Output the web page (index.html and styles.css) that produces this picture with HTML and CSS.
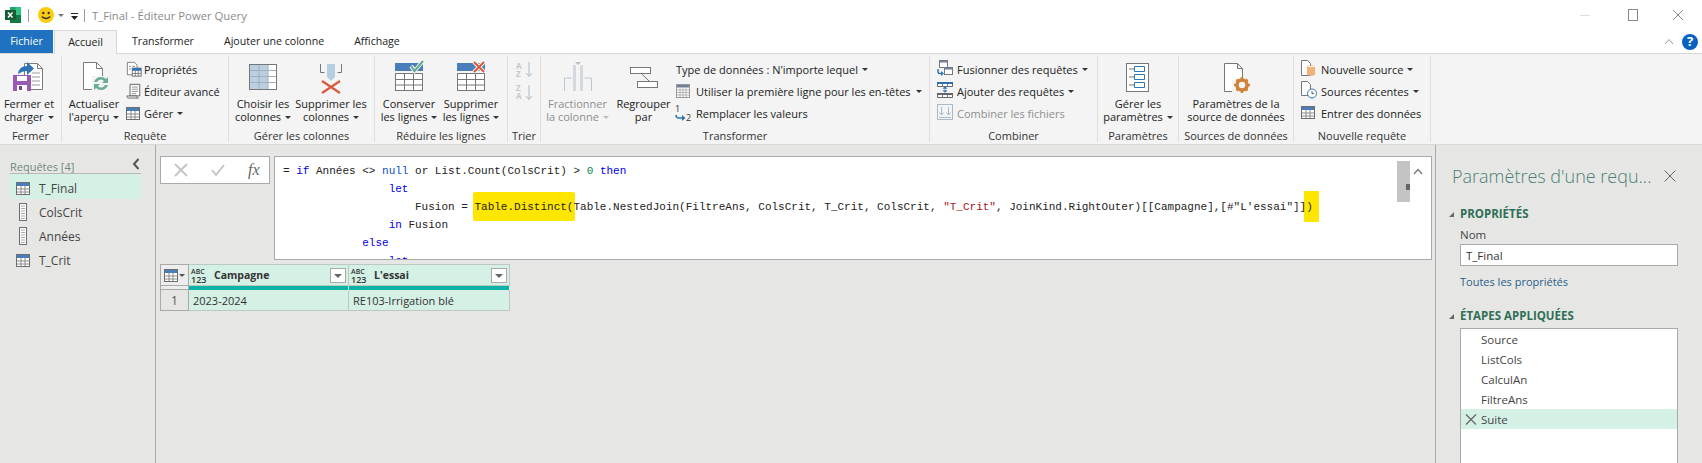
FILE: index.html
```html
<!DOCTYPE html>
<html lang="fr">
<head>
<meta charset="utf-8">
<title>T_Final - Éditeur Power Query</title>
<link rel="stylesheet" href="styles.css">
</head>
<body>
<svg class="defs" width="0" height="0">
  <symbol id="tbl" viewBox="0 0 14 13">
    <rect x=".5" y=".5" width="13" height="12" fill="#fff" stroke="#6d6d6d"/>
    <rect x="1" y="1" width="12" height="3" fill="#4a7ebb"/>
    <path d="M1 7h12M1 10h12M5 4v8M9 4v8" stroke="#8a8a8a" fill="none"/>
  </symbol>
  <symbol id="lst" viewBox="0 0 10 18">
    <rect x="1.500" y=".5" width="7" height="17" fill="#fff" stroke="#6d6d6d"/>
    <path d="M3 3h4M3 5.500h4M3 8h4M3 10.500h4M3 13h4M3 15.500h4" stroke="#a9a9a9"/>
  </symbol>
</svg>

<header class="titlebar">
  <svg class="qa-xl" width="16" height="16" viewBox="0 0 16 16"><rect x="5" width="11" height="16" fill="#21a366"/><rect x="5" y="8" width="11" height="8" fill="#107c41"/><rect x="10.500" y="0" width="5.500" height="8" fill="#33c481"/><rect y="3" width="11" height="10" fill="#185c37"/><path d="M3 5.500l4.500 5M7.500 5.500l-4.500 5" stroke="#fff" stroke-width="1.500"/></svg>
  <span class="qa-sep"></span>
  <svg class="qa-smile" width="16" height="16" viewBox="0 0 16 16"><circle cx="8" cy="8" r="8" fill="#fccb12"/><circle cx="5.300" cy="6" r="1.200" fill="#333"/><circle cx="10.700" cy="6" r="1.200" fill="#333"/><path d="M3.800 9.500q4.200 4 8.400 0" stroke="#333" fill="none" stroke-width="1.200"/></svg>
  <i class="caret caret-muted qa-caret"></i>
  <svg class="qa-custom" width="8" height="8" viewBox="0 0 8 8"><path d="M0 .5h7" stroke="#222"/><path d="M0 3h7L3.500 7z" fill="#222"/></svg>
  <span class="qa-sep qa-sep2"></span>
  <span class="title">T_Final - Éditeur Power Query</span>
  <div class="winctl">
    <span class="win-min"></span>
    <span class="win-max"></span>
    <svg width="12" height="12" viewBox="0 0 12 12"><path d="M1 1l10 10M11 1L1 11" stroke="#888" fill="none"/></svg>
  </div>
</header>

<nav class="tabs">
  <span class="tab tab-file">Fichier</span>
  <span class="tab tab-active">Accueil</span>
  <span class="tab">Transformer</span>
  <span class="tab">Ajouter une colonne</span>
  <span class="tab">Affichage</span>
  <span class="tab-right">
    <svg width="10" height="7" viewBox="0 0 10 7"><path d="M1 6l4-4.500L9 6" stroke="#999" fill="none"/></svg>
    <span class="help">?</span>
  </span>
</nav>

<section class="ribbon">
  <div class="group g-fermer">
    <div class="gbody">
      <div class="big w58">
        <svg class="bigicon" width="36" height="36" viewBox="0 0 36 36"><path d="M13.500 5.500h13l5 5v21h-18z" fill="#fff" stroke="#7d7d7d"/><path d="M26.500 5.500v5h5" fill="none" stroke="#7d7d7d"/><path d="M21 15h8M21 19h8M21 23h8M21 27h8" stroke="#9a9a9a"/><path d="M7 16q1-8 9-8V4l7 6.500-7 6.500v-4q-5 0-9 3z" fill="#2f75b5"/><rect x="2" y="17" width="18" height="16" fill="#9b59b6"/><rect x="6" y="18" width="10" height="5" fill="#fff"/><rect x="6" y="27" width="10" height="6" fill="#fff"/><rect x="8" y="28" width="3" height="4" fill="#7b3f98"/></svg>
        <span class="biglabel">Fermer et<br>charger<i class="caret"></i></span>
      </div>
    </div>
    <div class="glabel">Fermer</div>
  </div>

  <div class="group g-requete">
    <div class="gbody">
      <div class="big w64">
        <svg class="bigicon" width="36" height="36" viewBox="0 0 36 36"><path d="M7.500 4.500h13l6 6v21h-19z" fill="#fff" stroke="#7d7d7d"/><path d="M20.500 4.500v6h6" fill="none" stroke="#7d7d7d"/><rect x="16" y="18" width="18" height="16" fill="#f3f4f3"/><path d="M18 24q2-5 7-5 3 0 5 2l2-2v6h-6l2-2q-1-1.500-3-1.500-3 0-4 2.500zM32 27q-2 5-7 5-3 0-5-2l-2 2v-6h6l-2 2q1 1.500 3 1.500 3 0 4-2.500z" fill="#69ad92"/></svg>
        <span class="biglabel">Actualiser<br>l'aperçu<i class="caret"></i></span>
      </div>
      <div class="smallcol">
        <div class="small"><span class="si"><svg width="16" height="16" viewBox="0 0 18 18"><path d="M1.500 1.500h8l3 3v11h-11z" fill="#fff" stroke="#777"/><path d="M3.500 6h2M3.500 9h2M7 6h3" stroke="#777"/><rect x="7" y="8" width="10" height="9" fill="#fff" stroke="#666"/><rect x="7" y="8" width="10" height="3" fill="#2f6eae"/><path d="M10.500 11v6M13.800 11v6M7 14h10" stroke="#777"/></svg></span>Propriétés</div>
        <div class="small"><span class="si"><svg width="16" height="16" viewBox="0 0 18 18"><path d="M4.500 1.500h11v13H4.500z" fill="#fff" stroke="#555"/><path d="M6.500 4.500h7M6.500 7h7M6.500 9.500h7M6.500 12h5" stroke="#888"/><path d="M1 14.500h11q0 2.500 2 2.500H3q-2 0-2-2.500z" fill="#ddd" stroke="#555" stroke-width=".8"/></svg></span>Éditeur avancé</div>
        <div class="small"><span class="si"><svg width="14" height="13"><use href="#tbl"/></svg></span>Gérer<i class="caret"></i></div>
      </div>
    </div>
    <div class="glabel">Requête</div>
  </div>

  <div class="group g-cols">
    <div class="gbody">
      <div class="big w68">
        <svg class="bigicon" width="36" height="36" viewBox="0 0 36 36"><rect x="4.500" y="6.500" width="27" height="25" fill="#fff" stroke="#777"/><rect x="5" y="7" width="18" height="24" fill="#bccfe2"/><path d="M5 12.500h26M5 18.500h26M5 24.500h26M14 7v24M23 7v24" stroke="#9fb0c0" fill="none"/></svg>
        <span class="biglabel">Choisir les<br>colonnes<i class="caret"></i></span>
      </div>
      <div class="big w68">
        <svg class="bigicon" width="36" height="36" viewBox="0 0 36 36"><path d="M7.500 6v8.500h4M28.500 6v8.500h-4" fill="none" stroke="#777"/><path d="M14 6h8v13l-4 4-4-4z" fill="#b7cde0"/><path d="M9 23l18 12M27 23L9 35" stroke="#d9593d" stroke-width="2.200" fill="none"/></svg>
        <span class="biglabel">Supprimer les<br>colonnes<i class="caret"></i></span>
      </div>
    </div>
    <div class="glabel">Gérer les colonnes</div>
  </div>

  <div class="group g-lines">
    <div class="gbody">
      <div class="big w68">
        <svg class="bigicon" width="36" height="36" viewBox="0 0 36 36"><rect x="4" y="5" width="28" height="8" fill="#4a7ebb"/><rect x="4.500" y="15.500" width="27" height="17" fill="#fff" stroke="#777"/><path d="M4 21.500h28M4 27h28M13.500 15v17M22.500 15v17" stroke="#777"/><path d="M20 8l3.500 5L32 3" stroke="#f3f4f3" stroke-width="4" fill="none"/><path d="M20 8l3.500 5L32 3" stroke="#65a98f" stroke-width="2" fill="none"/></svg>
        <span class="biglabel">Conserver<br>les lignes<i class="caret"></i></span>
      </div>
      <div class="big w56">
        <svg class="bigicon" width="36" height="36" viewBox="0 0 36 36"><rect x="4" y="5" width="28" height="8" fill="#4a7ebb"/><rect x="4.500" y="15.500" width="27" height="17" fill="#fff" stroke="#777"/><path d="M4 21.500h28M4 27h28M13.500 15v17M22.500 15v17" stroke="#777"/><path d="M21 4l10 10M31 4L21 14" stroke="#f3f4f3" stroke-width="4"/><path d="M21 4l10 10M31 4L21 14" stroke="#d9593d" stroke-width="2"/></svg>
        <span class="biglabel">Supprimer<br>les lignes<i class="caret"></i></span>
      </div>
    </div>
    <div class="glabel">Réduire les lignes</div>
  </div>

  <div class="group g-trier">
    <div class="gbody gb-trier">
      <svg width="18" height="42" viewBox="0 0 18 42"><text x="0" y="8" class="sorttxt">A</text><text x="0" y="16" class="sorttxt">Z</text><path d="M13 1v14M10 12l3 3.500 3-3.500" stroke="#a9bac9" fill="none"/><text x="0" y="30" class="sorttxt">Z</text><text x="0" y="38" class="sorttxt">A</text><path d="M13 24v14M10 35l3 3.500 3-3.500" stroke="#a9bac9" fill="none"/></svg>
    </div>
    <div class="glabel">Trier</div>
  </div>

  <div class="group g-transf">
    <div class="gbody">
      <div class="big w73 off">
        <svg class="bigicon" width="36" height="36" viewBox="0 0 36 36"><path d="M4.500 33v-13h7M24.500 20h7v13" fill="none" stroke="#b9c6d3"/><rect x="13" y="7" width="3" height="26" fill="#d4d9df"/><rect x="20" y="7" width="3" height="26" fill="#d4d9df"/><path d="M15 4h6l-3 3z" fill="#bbb"/></svg>
        <span class="biglabel">Fractionner<br>la colonne<i class="caret caret-off"></i></span>
      </div>
      <div class="big w59">
        <svg class="bigicon" width="36" height="36" viewBox="0 0 36 36"><rect x="4.500" y="9.500" width="20" height="6" fill="#fff" stroke="#777"/><rect x="11.500" y="23.500" width="20" height="6" fill="#fff" stroke="#777"/><path d="M16 16l7 7" stroke="#777"/></svg>
        <span class="biglabel">Regrouper<br>par</span>
      </div>
      <div class="smallcol">
        <div class="small s-type">Type de données : N'importe lequel<i class="caret"></i></div>
        <div class="small"><span class="si-t"><svg width="14" height="14" viewBox="0 0 14 14"><rect x=".5" y=".5" width="13" height="13" fill="#fff" stroke="#999"/><rect x="1" y="1" width="12" height="2.500" fill="#6f7f9c"/><path d="M1 6h12M1 8.500h12M1 11h12M4 3v10M7 3v10M10 3v10" stroke="#b2b2b2"/></svg></span>Utiliser la première ligne pour les en-têtes<i class="caret caret-wide"></i></div>
        <div class="small"><span class="si-t"><svg width="17" height="18" viewBox="0 0 17 18"><text x="0" y="8" class="numtxt">1</text><text x="11" y="17" class="numtxt">2</text><path d="M1 11q0 3 3 3h5" fill="none" stroke="#2f75b5" stroke-width="1.500"/><path d="M7 11l3.500 3L7 17z" fill="#2f75b5"/></svg></span>Remplacer les valeurs</div>
      </div>
    </div>
    <div class="glabel">Transformer</div>
  </div>

  <div class="group g-combine">
    <div class="gbody">
      <div class="smallcol sc-pad">
        <div class="small"><span class="si-c"><svg width="16" height="16" viewBox="0 0 16 16"><rect x="2.500" y=".5" width="8" height="7" fill="#fff" stroke="#777"/><rect x="2.500" y=".5" width="8" height="2" fill="#6f7f9c"/><rect x="7.500" y="7.500" width="8" height="7" fill="#fff" stroke="#777"/><rect x="7.500" y="7.500" width="8" height="2" fill="#6f7f9c"/><path d="M1 9v3q0 1.500 1.500 1.500H5" fill="none" stroke="#2f75b5" stroke-width="1.500"/><path d="M4 11l3 2.500L4 16z" fill="#2f75b5"/></svg></span>Fusionner des requêtes<i class="caret"></i></div>
        <div class="small"><span class="si-c"><svg width="16" height="16" viewBox="0 0 16 16"><path d="M.5 .5h15v4H.5zM.5 11.500h15v4H.5z" fill="#fff" stroke="#666"/><rect x="0" y="0" width="16" height="2" fill="#2f6eae"/><rect x="0" y="11" width="16" height="2" fill="#666"/><path d="M5.500 2v3M10.500 2v3M5.500 13v3M10.500 13v3" stroke="#777"/><path d="M8 5v5M6 6.500h4L8 4.500zM6 8.500h4L8 10.500z" fill="#2f75b5" stroke="#2f75b5" stroke-width=".5"/></svg></span>Ajouter des requêtes<i class="caret"></i></div>
        <div class="small off"><span class="si-c"><svg width="16" height="16" viewBox="0 0 16 16"><rect x=".5" y=".5" width="15" height="15" fill="none" stroke="#a9bac9"/><path d="M4.500 3v8M2.500 8.500l2 2.500 2-2.500M11.500 3v8M9.500 8.500l2 2.500 2-2.500M2 13.500h12" fill="none" stroke="#a9bac9"/></svg></span>Combiner les fichiers</div>
      </div>
    </div>
    <div class="glabel">Combiner</div>
  </div>

  <div class="group g-params">
    <div class="gbody">
      <div class="big grow">
        <svg class="bigicon" width="36" height="36" viewBox="0 0 36 36"><rect x="6.500" y="5.500" width="22" height="28" fill="#fff" stroke="#777"/><path d="M9 11h5M9 19h5M9 27h5" stroke="#777"/><path d="M14.500 8.500h10v5h-10zM14.500 16.500h10v5h-10zM14.500 24.500h10v5h-10z" fill="#fff" stroke="#2f75b5"/></svg>
        <span class="biglabel">Gérer les<br>paramètres<i class="caret"></i></span>
      </div>
    </div>
    <div class="glabel">Paramètres</div>
  </div>

  <div class="group g-src">
    <div class="gbody">
      <div class="big grow">
        <svg class="bigicon" width="36" height="36" viewBox="0 0 36 36"><path d="M6.500 5.500h13l5 5v23h-18z" fill="#fff" stroke="#777"/><path d="M19.500 5.500v5h5" fill="none" stroke="#777"/><rect x="14" y="22" width="19" height="14" fill="#f3f4f3"/><circle cx="24" cy="27" r="5" fill="none" stroke="#cf8238" stroke-width="3.500"/><path d="M24 19v3M24 32v3M16 27h3M29 27h3M18.500 21.500l2 2M27.500 30.500l2 2M29.500 21.500l-2 2M20.500 30.500l-2 2" stroke="#cf8238" stroke-width="2.500"/></svg>
        <span class="biglabel">Paramètres de la<br>source de données</span>
      </div>
    </div>
    <div class="glabel">Sources de données</div>
  </div>

  <div class="group g-new">
    <div class="gbody">
      <div class="smallcol sc-pad2">
        <div class="small"><span class="si-n"><svg width="16" height="18" viewBox="0 0 16 18"><path d="M.5 1.500h6l3 3v12H.5z" fill="#fff" stroke="#777"/><path d="M6 7q4-1.500 8 0v9q-4 1.500-8 0z" fill="#f0b27a"/><path d="M6.500 7q3.500 1.500 7.500 0" stroke="#fff" fill="none"/></svg></span>Nouvelle source<i class="caret"></i></div>
        <div class="small"><span class="si-n"><svg width="16" height="18" viewBox="0 0 16 18"><path d="M.5 .5h6l3 3v11H.5z" fill="#fff" stroke="#777"/><circle cx="11" cy="12.500" r="4.500" fill="#fff" stroke="#2f75b5"/><path d="M11 10v2.700h2.200" stroke="#555" fill="none"/></svg></span>Sources récentes<i class="caret"></i></div>
        <div class="small"><span class="si-n"><svg width="14" height="13"><use href="#tbl"/></svg></span>Entrer des données</div>
      </div>
    </div>
    <div class="glabel">Nouvelle requête</div>
  </div>
</section>

<main class="main">
  <aside class="queries">
    <div class="q-head">
      <span>Requêtes [4]</span>
      <svg width="8" height="12" viewBox="0 0 8 12"><path d="M6.500 1L2 6l4.500 5" stroke="#555" stroke-width="2" fill="none"/></svg>
    </div>
    <div class="q-item q-sel"><span class="q-ic"><svg width="14" height="13"><use href="#tbl"/></svg></span>T_Final</div>
    <div class="q-item"><span class="q-ic"><svg width="10" height="18"><use href="#lst"/></svg></span>ColsCrit</div>
    <div class="q-item"><span class="q-ic"><svg width="10" height="18"><use href="#lst"/></svg></span>Années</div>
    <div class="q-item"><span class="q-ic"><svg width="14" height="13"><use href="#tbl"/></svg></span>T_Crit</div>
  </aside>

  <section class="center">
    <div class="fbar">
      <div class="fbtns">
        <svg width="14" height="14" viewBox="0 0 14 14"><path d="M1 1l12 12M13 1L1 13" stroke="#c4c4c4" stroke-width="1.800" fill="none"/></svg>
        <svg width="14" height="14" viewBox="0 0 14 14"><path d="M1 7l4 5 8-10" stroke="#c4c4c4" stroke-width="2" fill="none"/></svg>
        <span class="fx">fx</span>
      </div>
      <div class="code">
<pre class="codetext"><span>= <b class="kw">if</b> Années &lt;&gt; <b class="kw2">null</b> or List.Count(ColsCrit) &gt; <b class="num">0</b> <b class="kw">then</b></span>
<span>                <b class="kw">let</b></span>
<span>                    Fusion = <span class="mark">Table.Distinct</span>(Table.NestedJoin(FiltreAns, ColsCrit, T_Crit, ColsCrit, <b class="str">"T_Crit"</b>, JoinKind.RightOuter)[[Campagne],[#"L'essai"]<span class="mark2">])</span></span>
<span>                <b class="kw">in</b> Fusion</span>
<span>            <b class="kw">else</b></span>
<span>                <b class="kw">let</b></span></pre>
        <div class="sb"><i></i></div>
        <svg class="sbup" width="10" height="7" viewBox="0 0 10 7"><path d="M1 6l4-4.500L9 6" stroke="#777" stroke-width="1.300" fill="none"/></svg>
      </div>
    </div>
    <div class="grid">
      <div class="c-corner"><svg width="14" height="13"><use href="#tbl"/></svg><i class="caret caret-tiny"></i></div>
      <div class="c-head">
        <span class="typ"><span>ABC</span><span class="typ2">123</span></span>
        <span class="hname">Campagne</span>
        <span class="filter"><i class="caret caret-filter"></i></span>
      </div>
      <div class="c-head">
        <span class="typ"><span>ABC</span><span class="typ2">123</span></span>
        <span class="hname">L'essai</span>
        <span class="filter"><i class="caret caret-filter"></i></span>
      </div>
      <div class="c-gap"></div>
      <div class="c-teal"></div>
      <div class="c-teal"></div>
      <div class="c-idx">1</div>
      <div class="c-cell">2023-2024</div>
      <div class="c-cell">RE103-Irrigation blé</div>
    </div>
  </section>

  <aside class="settings">
    <div class="s-title"><span>Paramètres d'une requ...</span><svg width="12" height="12" viewBox="0 0 12 12"><path d="M.5 .5l11 11M11.500 .5l-11 11" stroke="#666" fill="none"/></svg></div>
    <div class="s-sec s-first"><i class="tri"></i>PROPRIÉTÉS</div>
    <div class="s-field">Nom</div>
    <div class="s-input">T_Final</div>
    <div class="s-link">Toutes les propriétés</div>
    <div class="s-sec s-second"><i class="tri"></i>ÉTAPES APPLIQUÉES</div>
    <div class="s-steps">
      <div class="step">Source</div>
      <div class="step">ListCols</div>
      <div class="step">CalculAn</div>
      <div class="step">FiltreAns</div>
      <div class="step step-sel"><svg width="12" height="11" viewBox="0 0 12 11"><path d="M1 .5l10 10M11 .5l-10 10" stroke="#666" stroke-width="1.200" fill="none"/></svg>Suite</div>
    </div>
  </aside>
</main>
</body>
</html>
```

FILE: styles.css
```css
* { box-sizing: border-box; }
html, body { margin: 0; height: 100%; }
body {
  width: 1702px;
  height: 463px;
  overflow: hidden;
  display: flex;
  flex-direction: column;
  background: #e6e7e5;
  color: #333;
  font: 11px/13px "Open Sans", "Noto Sans", sans-serif;
}
.defs { position: absolute; }

.titlebar { height: 30px; background: #fff; display: flex; align-items: center; flex: none; }
.qa-xl { margin-left: 5px; }
.qa-sep { width: 1px; height: 13px; background: #999; margin-left: 7px; }
.qa-smile { margin-left: 9px; }
.qa-caret { margin-left: 5px; }
.qa-custom { margin-left: 7px; margin-top: 3px; }
.qa-sep2 { margin-left: 5px; }
.title { margin-left: 7px; font-size: 11.3px; color: #8a8a8a; }
.winctl { margin-left: auto; display: flex; align-items: center; gap: 34px; padding-right: 18px; }
.win-min { width: 10px; height: 1px; background: #ddd; margin-right: 4px; }
.win-max { width: 10px; height: 12px; border: 1px solid #888; }

.tabs { height: 23px; background: #fff; display: flex; flex: none; align-items: stretch; position: relative; }
.tab { padding: 0 15px; display: flex; align-items: center; color: #222; font-size: 10.6px; }
.tab-file { width: 53px; padding: 0; justify-content: center; background: #1f72c0; color: #fff; margin-right: 1px; }
.tab-active {
  width: 63px; padding: 0; justify-content: center;
  background: #f3f4f3; border: 1px solid #d8d8d8; border-bottom: 0;
  margin-bottom: -1px; z-index: 1;
}
.tab-right { margin-left: auto; display: flex; align-items: center; gap: 8px; padding-right: 4px; }
.help {
  width: 16px; height: 16px; border-radius: 50%; background: #0a62c0; color: #fff;
  font-weight: 700; font-size: 13px; display: flex; align-items: center; justify-content: center;
}

.ribbon {
  height: 92px; flex: none; display: flex; background: #f3f4f3;
  border-top: 1px solid #d6d6d6; border-bottom: 1px solid #d9d9d9; padding-top: 2px;
}
.group { display: flex; flex-direction: column; height: 86px; border-right: 1px solid #dfdfdf; flex: none; }
.gbody { flex: 1; display: flex; min-height: 0; }
.glabel { height: 15px; text-align: center; line-height: 18px; color: #333; white-space: nowrap; }
.g-fermer { width: 62px; }
.g-requete { width: 167px; }
.g-cols { width: 146px; }
.g-lines { width: 133px; }
.g-trier { width: 33px; }
.g-transf { width: 389px; }
.g-combine { width: 168px; }
.g-params { width: 81px; }
.g-src { width: 115px; }
.g-new { width: 137px; }

.big { display: flex; flex-direction: column; align-items: center; flex: none; }
.big.grow { flex: 1; }
.w56 { width: 56px; }
.w58 { width: 58px; }
.w59 { width: 59px; }
.w64 { width: 64px; }
.w68 { width: 68px; }
.w73 { width: 73px; }
.bigicon { display: block; margin-top: 2px; height: 36px; flex: none; }
.biglabel { margin-top: 3px; text-align: center; white-space: nowrap; line-height: 13px; color: #222; }
.off, .off .biglabel { color: #8f8f8f; }

.caret {
  display: inline-block; width: 0; height: 0; margin-left: 4px; vertical-align: 2px;
  border-left: 3px solid transparent; border-right: 3px solid transparent; border-top: 3px solid #333;
}
.caret-muted { border-top-color: #777; }
.caret-off { border-top-color: #bbb; }
.caret-wide { margin-left: 5px; }
.caret-tiny { margin-left: 1px; vertical-align: 0; border-top-color: #555; }
.caret-filter { margin: 0; border-left-width: 4px; border-right-width: 4px; border-top: 4px solid #666; }

.smallcol { display: flex; flex-direction: column; padding-top: 2px; }
.small { height: 22px; display: flex; align-items: center; white-space: nowrap; color: #222; }
.small .caret { margin-top: 1px; }
.small.off { color: #8f8f8f; }
.si { width: 18px; display: flex; justify-content: flex-start; }
.s-type { padding-left: 3px; }
.si-t { width: 23px; display: flex; justify-content: center; padding-right: 3px; }
.sc-pad { padding-left: 7px; }
.si-c { width: 20px; }
.sc-pad2 { padding-left: 7px; }
.si-n { width: 20px; }
.gb-trier { padding: 5px 0 0 8px; }
.sorttxt { font: 700 8px "Open Sans", sans-serif; fill: #c3c8cd; }
.numtxt { font: 9px "Open Sans", sans-serif; fill: #333; }

.main { flex: 1; display: flex; min-height: 0; }
.queries { width: 156px; flex: none; border-right: 1px solid #a9a9a9; padding: 14px 0 0 10px; }
.q-head {
  width: 131px; height: 15px; display: flex; justify-content: space-between; align-items: center;
  border-bottom: 1px solid #b8b8b8; color: #6f8a78; padding-right: 1px;
}
.q-head svg { margin-top: -5px; }
.q-item { width: 131px; height: 24px; display: flex; align-items: center; font-size: 12px; color: #444; padding-top: 2px; }
.q-sel { height: 25px; background: #d5f0e5; padding-top: 3px; }
.q-ic { width: 29px; display: flex; justify-content: center; padding-left: 2px; padding-right: 5px; }

.center { flex: 1; min-width: 0; padding: 11px 0 0 4px; }
.fbar { display: flex; height: 104px; gap: 4px; }
.fbtns {
  width: 110px; height: 28px; display: flex; align-items: center; gap: 23px; padding-left: 13px;
  background: #fff; border: 1px solid #a9a9a9;
}
.fx { font: italic 16px "Liberation Serif", serif; color: #666; }
.code { position: relative; width: 1158px; height: 104px; background: #fff; border: 1px solid #a9a9a9; overflow: hidden; }
.codetext { margin: 0; padding: 5px 0 0 8px; font: 11px/18px "Liberation Mono", monospace; color: #222; }
.codetext b { font-weight: 400; }
.kw { color: #0000e6; }
.kw2 { color: #0a50c8; }
.num { color: #098658; }
.str { color: #a31515; }
.mark { background: #ffe600; padding: 9px 8px 8px 1px; border-radius: 2px; margin-left: -1px; margin-right: -8px; }
.mark2 {
  background: linear-gradient(to right, transparent 4px, #ffe600 4px);
  padding: 10px 6px 9px 0; margin-right: -6px;
}
.sb { position: absolute; right: 21px; top: 4px; width: 13px; height: 41px; background: #c4c4c4; }
.sb i { position: absolute; right: 0; top: 23px; width: 4px; height: 6px; background: #666; }
.sbup { position: absolute; right: 8px; top: 11px; }

.grid {
  margin-top: 4px; display: grid; width: 350px;
  grid-template-columns: 29px 160px 161px;
  grid-template-rows: 22px 4px 21px;
}
.c-corner { border: 1px solid #a9a9a9; display: flex; align-items: center; justify-content: center; background: #ededed; }
.c-head {
  background: #d5f0e5; border: 1px solid #bcc8c2; border-left: 0;
  display: flex; align-items: center; padding: 1px 2px 0;
}
.typ { display: flex; flex-direction: column; width: 18px; font-size: 7px; line-height: 7px; font-weight: 600; }
.typ2 { font-size: 9px; line-height: 9px; }
.hname { margin-left: 5px; font-weight: 700; font-size: 10.5px; flex: 1; }
.filter { width: 16px; height: 15px; background: #fff; border: 1px solid #a9a9a9; display: flex; align-items: center; justify-content: center; }
.c-gap { border-left: 1px solid #a9a9a9; border-right: 1px solid #a9a9a9; border-bottom: 1px solid #a9a9a9; background: #ededed; }
.c-teal { background: #0cb3a4; border-right: 1px solid #d5f0e5; }
.c-idx { border: 1px solid #a9a9a9; border-top: 0; display: flex; align-items: center; justify-content: center; font-size: 12px; color: #555; }
.c-cell { background: #d5f0e5; display: flex; align-items: center; padding-left: 4px; border-right: 1px solid #bcc8c2; border-bottom: 1px solid #bcc8c2; color: #333; }

.settings { width: 267px; flex: none; border-left: 1px solid #a9a9a9; padding: 20px 25px 0 16px; margin-left: 2px; font-size: 11.5px; }
.s-title { display: flex; justify-content: space-between; align-items: center; font-size: 18px; line-height: 22px; font-weight: 300; color: #4d7f73; white-space: nowrap; width: 224px; }
.s-sec { display: flex; align-items: center; font-weight: 700; line-height: 16px; color: #2f6f55; position: relative; padding-left: 8px; }
.s-first { margin-top: 19px; }
.s-second { margin-top: 19px; }
.tri { position: absolute; left: -3px; top: 6px; border-left: 5px solid transparent; border-bottom: 5px solid #666; }
.s-field { margin: 5px 0 0 8px; color: #444; line-height: 15px; }
.s-input { margin: 2px 0 0 8px; width: 218px; height: 22px; border: 1px solid #a9a9a9; background: #fff; padding-left: 5px; display: flex; align-items: center; color: #333; }
.s-link { margin: 8px 0 0 8px; color: #2b5f8a; line-height: 15px; font-size: 11px; }
.s-steps { margin: 4px 0 0 8px; width: 218px; height: 140px; border: 1px solid #a9a9a9; background: #fff; }
.step { height: 20px; display: flex; align-items: center; padding-left: 20px; color: #444; }
.step-sel { background: #d5f0e5; padding-left: 4px; gap: 4px; }
```
